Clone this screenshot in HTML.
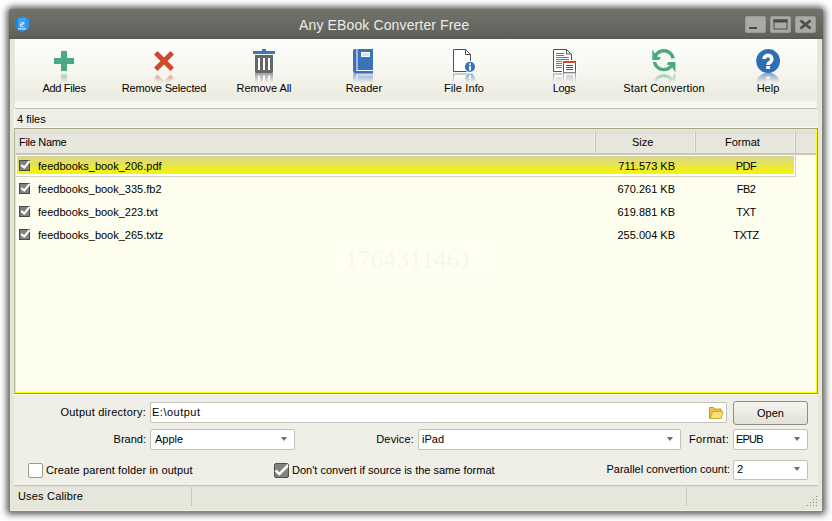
<!DOCTYPE html>
<html><head><meta charset="utf-8">
<style>
*{box-sizing:border-box;margin:0;padding:0}
html,body{width:832px;height:521px;overflow:hidden;background:#fff}
body{position:relative;font-family:"Liberation Sans",sans-serif;font-size:11px;color:#000}
.a{position:absolute}
.t{position:absolute;white-space:pre;line-height:13px}
.r{text-align:right}
#win{left:9px;top:9px;width:814px;height:503px;background:#e7e6da;border:1px solid #84847a;border-radius:3px 3px 0 0;box-shadow:0 0 7px 2px rgba(0,0,0,.7)}
#title{left:9px;top:9px;width:814px;height:30px;background:linear-gradient(#71736c,#676862 60%,#60615b 90%,#575852);border-radius:3px 3px 0 0}
.wb{position:absolute;top:16px;width:21px;height:17px;background:#a9aaa3;border-radius:3px;box-shadow:inset 0 0 0 1px #9a9b94}
#tb{left:15px;top:39px;width:802px;height:70px;background:linear-gradient(#fdfdfb 0%,#f9f9f4 35%,#f1f0e7 70%,#ecebdf 86%,#f6f5ee 92%,#fbfbf7 100%);border-bottom:1px solid #c1c0b3}
#strip{left:14px;top:109px;width:804px;height:19px;background:#efeee6;border-left:1px solid #fbfbf7;border-bottom:1px solid #fbfbf7}
#listo{left:14px;top:128px;width:804px;height:266px;border:1px solid #93936c;border-left-color:#b9b98f;border-top-color:#a9a980}
#list{left:15px;top:129px;width:802px;height:264px;background:#fefeee;border:1px solid #ffff00;box-shadow:inset 0 0 0 1px #fcfcf4}
#hdr{left:16px;top:130px;width:800px;height:25px;background:linear-gradient(#dfded4,#e7e6dd 25%,#e8e7de);border-top:1px solid #e4e4e8;border-bottom:2px solid #c9c7b9}
.hsep{position:absolute;top:131px;width:2px;height:22px;border-left:1px solid #efeee8;border-right:1px solid #c9c7ba}
.lbl{position:absolute;top:82px;letter-spacing:-.3px;text-align:center;white-space:pre;line-height:13px;width:120px}
#sel{left:16px;top:155px;width:780px;height:22px;background:#fff;border-bottom:1px solid #d2d1c4;border-right:1px solid #d2d1c4}
#selin{left:16px;top:155px;width:779px;height:20px;border:1px solid #fff;background:linear-gradient(#d8d495,#f8f500)}
#panel{left:14px;top:394px;width:804px;height:92px;background:#efeee7;border-top:1px solid #fbfbf8;border-bottom:1px solid #c8c7bb;box-shadow:0 1px 0 #dddcd0}
#status{left:10px;top:488px;width:812px;height:23px;background:#e7e6db;border-bottom:1px solid #f2f2ea}
.inp{position:absolute;background:#fff;border:1px solid #c3c2b6;border-radius:2px}
.arr{position:absolute;width:0;height:0;border-left:3.5px solid transparent;border-right:3.5px solid transparent;border-top:4px solid #6d6d64}
.cb{position:absolute;width:11px;height:11px;background:#828282;border:1px solid #484848}
.cbb{position:absolute;width:15px;height:15px;border:1px solid #9a9990;border-radius:2px;background:#fff}
</style></head><body>
<div id="win" class="a"></div>
<div id="title" class="a"></div>
<div class="t" style="left:299px;top:17px;font-size:14px;line-height:16px;letter-spacing:.13px;color:#ecece6">Any EBook Converter Free</div>
<div class="wb" style="left:745px"></div>
<div class="wb" style="left:770px"></div>
<div class="wb" style="left:795px"></div>

<div id="tb" class="a"></div>
<div id="strip" class="a"></div>
<div class="t" style="left:17px;top:113px">4 files</div>
<div id="listo" class="a"></div><div id="list" class="a"></div>
<div id="hdr" class="a"></div>
<div class="t" style="left:19px;top:136px;letter-spacing:-.3px">File Name</div>
<div class="t" style="left:632px;top:136px">Size</div>
<div class="t" style="left:725px;top:136px">Format</div>
<div class="hsep" style="left:594px"></div>
<div class="hsep" style="left:694px"></div>
<div class="hsep" style="left:794px"></div>
<div id="sel" class="a"></div>
<div id="selin" class="a"></div>

<svg class="a" style="left:0;top:0" width="832" height="521" viewBox="0 0 832 521">
<defs>
<linearGradient id="fg" gradientUnits="userSpaceOnUse" x1="0" y1="73" x2="0" y2="83">
<stop offset="0" stop-color="#fff" stop-opacity=".6"/><stop offset="1" stop-color="#fff" stop-opacity="0"/></linearGradient>
<mask id="fade" maskUnits="userSpaceOnUse" x="0" y="70" width="832" height="20"><rect x="0" y="70" width="832" height="20" fill="url(#fg)"/></mask>
</defs>
<g>
<!-- plus -->
<path d="M61 51h6v7h7v6h-7v7h-6v-7h-7v-6h7z" fill="#4aa97f"/>
<!-- X -->
<path d="M154 54.5L157.5 51L164 57.5L170.5 51L174 54.5L167.5 61L174 67.5L170.5 71L164 64.5L157.5 71L154 67.5L160.5 61z" fill="#d0492f"/>
<!-- trash -->
<rect x="253" y="51" width="22" height="3" fill="#3b78c0"/>
<rect x="262" y="49" width="4" height="2" fill="#3b78c0"/>
<path d="M255 55h18v17a1 1 0 0 1-1 1h-16a1 1 0 0 1-1-1z" fill="#666"/>
<rect x="258" y="58" width="2" height="12" fill="#fff"/>
<rect x="263" y="58" width="2" height="12" fill="#fff"/>
<rect x="268" y="58" width="2" height="12" fill="#fff"/>
<!-- book -->
<path d="M355 49h18v24h-18a2 2 0 0 1-2-2v-20a2 2 0 0 1 2-2z" fill="#3b73b9"/>
<rect x="356.5" y="49" width="1" height="21.5" fill="#fff"/>
<rect x="356.5" y="70" width="16.5" height="1" fill="#fff"/>
<rect x="361" y="52" width="9" height="5" fill="#fff"/>
<rect x="362" y="53" width="7" height="3" fill="#d6e0ee"/>
<!-- file info -->
<path d="M453.5 49.5h12l5 5v17h-17z" fill="#fff" stroke="#505050" stroke-width="1"/>
<path d="M465.5 49.5v5h5" fill="none" stroke="#505050" stroke-width="1"/>
<circle cx="470" cy="66.8" r="6" fill="#fff"/>
<circle cx="470" cy="66.8" r="5.1" fill="#3a74bb"/>
<rect x="469.1" y="63.3" width="1.9" height="1.9" fill="#fff"/>
<rect x="469.1" y="66.2" width="1.9" height="4.3" fill="#fff"/>
<!-- logs -->
<path d="M553.5 49.5h13l5 5v17h-18z" fill="#fff" stroke="#555" stroke-width="1"/>
<path d="M566.5 49.5v4.5h5" fill="none" stroke="#555" stroke-width="1"/>
<g fill="#777"><rect x="556" y="53" width="8" height="1"/><rect x="556" y="55" width="8" height="1"/><rect x="556" y="57" width="13" height="1"/><rect x="556" y="59" width="13" height="1"/><rect x="556" y="61" width="7" height="1"/><rect x="556" y="63" width="7" height="1"/><rect x="556" y="65" width="7" height="1"/><rect x="556" y="67" width="7" height="1"/></g>
<rect x="562" y="60" width="15" height="14" fill="#fff"/>
<rect x="563.5" y="61.5" width="12" height="11" fill="#fff" stroke="#555" stroke-width="1"/>
<rect x="563" y="61" width="13" height="2" fill="#d4472c"/>
<g fill="#555"><rect x="566" y="65" width="7" height="1"/><rect x="566" y="67" width="7" height="1"/><rect x="566" y="69" width="7" height="1"/></g>
<!-- refresh -->
<clipPath id="rc"><path d="M648 40H663.8V60H648zM663.8 40H690V58.5H663.8zM640 62H690V80H640z"/></clipPath>
<path d="M652.6999999999999 60.2a11.1 11.1 0 1 0 22.2 0a11.1 11.1 0 1 0 -22.2 0zM656.0 60.2a7.8 7.8 0 1 0 15.6 0a7.8 7.8 0 1 0 -15.6 0z" fill="#4aa97f" fill-rule="evenodd" clip-path="url(#rc)"/>
<path d="M652.3 49.2L652.3 60L659.2 60L661 57.5L656.6 56.4z" fill="#4aa97f"/>
<path d="M675.4 72.2L675.4 62L668.4 62L666.6 64.5L671 65.6z" fill="#4aa97f"/>
<!-- help -->
<circle cx="768.1" cy="61" r="11.9" fill="#2f6db4"/>
<path d="M764.2 59A3.8 3.8 0 1 1 770.4 62.1Q768.1 63.2 768.1 65" fill="none" stroke="#fff" stroke-width="3.8"/>
<rect x="766.1" y="66.1" width="4" height="2.8" fill="#fff"/>
</g>
<g mask="url(#fade)"><g transform="translate(0,145.5) scale(1,-1)">
<!-- plus -->
<path d="M61 51h6v7h7v6h-7v7h-6v-7h-7v-6h7z" fill="#4aa97f"/>
<!-- X -->
<path d="M154 54.5L157.5 51L164 57.5L170.5 51L174 54.5L167.5 61L174 67.5L170.5 71L164 64.5L157.5 71L154 67.5L160.5 61z" fill="#d0492f"/>
<!-- trash -->
<rect x="253" y="51" width="22" height="3" fill="#3b78c0"/>
<rect x="262" y="49" width="4" height="2" fill="#3b78c0"/>
<path d="M255 55h18v17a1 1 0 0 1-1 1h-16a1 1 0 0 1-1-1z" fill="#666"/>
<rect x="258" y="58" width="2" height="12" fill="#fff"/>
<rect x="263" y="58" width="2" height="12" fill="#fff"/>
<rect x="268" y="58" width="2" height="12" fill="#fff"/>
<!-- book -->
<path d="M355 49h18v24h-18a2 2 0 0 1-2-2v-20a2 2 0 0 1 2-2z" fill="#3b73b9"/>
<rect x="356.5" y="49" width="1" height="21.5" fill="#fff"/>
<rect x="356.5" y="70" width="16.5" height="1" fill="#fff"/>
<rect x="361" y="52" width="9" height="5" fill="#fff"/>
<rect x="362" y="53" width="7" height="3" fill="#d6e0ee"/>
<!-- file info -->
<path d="M453.5 49.5h12l5 5v17h-17z" fill="#fff" stroke="#505050" stroke-width="1"/>
<path d="M465.5 49.5v5h5" fill="none" stroke="#505050" stroke-width="1"/>
<circle cx="470" cy="66.8" r="6" fill="#fff"/>
<circle cx="470" cy="66.8" r="5.1" fill="#3a74bb"/>
<rect x="469.1" y="63.3" width="1.9" height="1.9" fill="#fff"/>
<rect x="469.1" y="66.2" width="1.9" height="4.3" fill="#fff"/>
<!-- logs -->
<path d="M553.5 49.5h13l5 5v17h-18z" fill="#fff" stroke="#555" stroke-width="1"/>
<path d="M566.5 49.5v4.5h5" fill="none" stroke="#555" stroke-width="1"/>
<g fill="#777"><rect x="556" y="53" width="8" height="1"/><rect x="556" y="55" width="8" height="1"/><rect x="556" y="57" width="13" height="1"/><rect x="556" y="59" width="13" height="1"/><rect x="556" y="61" width="7" height="1"/><rect x="556" y="63" width="7" height="1"/><rect x="556" y="65" width="7" height="1"/><rect x="556" y="67" width="7" height="1"/></g>
<rect x="562" y="60" width="15" height="14" fill="#fff"/>
<rect x="563.5" y="61.5" width="12" height="11" fill="#fff" stroke="#555" stroke-width="1"/>
<rect x="563" y="61" width="13" height="2" fill="#d4472c"/>
<g fill="#555"><rect x="566" y="65" width="7" height="1"/><rect x="566" y="67" width="7" height="1"/><rect x="566" y="69" width="7" height="1"/></g>
<!-- refresh -->
<clipPath id="rc2"><path d="M648 40H663.8V60H648zM663.8 40H690V58.5H663.8zM640 62H690V80H640z"/></clipPath>
<path d="M652.6999999999999 60.2a11.1 11.1 0 1 0 22.2 0a11.1 11.1 0 1 0 -22.2 0zM656.0 60.2a7.8 7.8 0 1 0 15.6 0a7.8 7.8 0 1 0 -15.6 0z" fill="#4aa97f" fill-rule="evenodd" clip-path="url(#rc2)"/>
<path d="M652.3 49.2L652.3 60L659.2 60L661 57.5L656.6 56.4z" fill="#4aa97f"/>
<path d="M675.4 72.2L675.4 62L668.4 62L666.6 64.5L671 65.6z" fill="#4aa97f"/>
<!-- help -->
<circle cx="768.1" cy="61" r="11.9" fill="#2f6db4"/>
<path d="M764.2 59A3.8 3.8 0 1 1 770.4 62.1Q768.1 63.2 768.1 65" fill="none" stroke="#fff" stroke-width="3.8"/>
<rect x="766.1" y="66.1" width="4" height="2.8" fill="#fff"/>
</g></g>
</svg>
<div class="lbl" style="left:4px;letter-spacing:-0.30px">Add Files</div>
<div class="lbl" style="left:104px;letter-spacing:-0.16px">Remove Selected</div>
<div class="lbl" style="left:204px;letter-spacing:-0.08px">Remove All</div>
<div class="lbl" style="left:304px;letter-spacing:0.04px">Reader</div>
<div class="lbl" style="left:404px;letter-spacing:0.12px">File Info</div>
<div class="lbl" style="left:504px;letter-spacing:-0.30px">Logs</div>
<div class="lbl" style="left:604px;letter-spacing:0.12px">Start Convertion</div>
<div class="lbl" style="left:708px;letter-spacing:0.03px">Help</div>

<!-- rows -->
<div class="cb" style="left:19px;top:160px"></div>
<div class="cb" style="left:19px;top:183px"></div>
<div class="cb" style="left:19px;top:206px"></div>
<div class="cb" style="left:19px;top:229px"></div>
<div class="t" style="left:38px;top:160px">feedbooks_book_206.pdf</div>
<div class="t" style="left:38px;top:183px">feedbooks_book_335.fb2</div>
<div class="t" style="left:38px;top:206px">feedbooks_book_223.txt</div>
<div class="t" style="left:38px;top:229px">feedbooks_book_265.txtz</div>
<div class="t r" style="left:575px;width:100px;top:160px">711.573 KB</div>
<div class="t r" style="left:575px;width:100px;top:183px">670.261 KB</div>
<div class="t r" style="left:575px;width:100px;top:206px">619.881 KB</div>
<div class="t r" style="left:575px;width:100px;top:229px">255.004 KB</div>
<div class="t" style="left:696px;width:100px;text-align:center;letter-spacing:-.5px;top:160px">PDF</div>
<div class="t" style="left:696px;width:100px;text-align:center;letter-spacing:-.5px;top:183px">FB2</div>
<div class="t" style="left:696px;width:100px;text-align:center;letter-spacing:-.5px;top:206px">TXT</div>
<div class="t" style="left:696px;width:100px;text-align:center;letter-spacing:-.5px;top:229px">TXTZ</div>

<div id="panel" class="a"></div>
<div class="t r" style="left:40px;width:106px;top:406px;letter-spacing:.25px">Output directory:</div>
<div class="inp" style="left:150px;top:402px;width:577px;height:21px"></div>
<div class="t" style="left:152px;top:406px;letter-spacing:.5px">E:\output</div>
<div class="a" style="left:733px;top:401px;width:75px;height:24px;border:1px solid #8e8d84;border-radius:3px;background:linear-gradient(#f6f5f0,#e2e1d7)"></div>
<div class="t" style="left:733px;width:75px;text-align:center;top:407px">Open</div>

<div class="t r" style="left:80px;width:66px;top:433px">Brand:</div>
<div class="inp" style="left:150px;top:429px;width:145px;height:21px"></div>
<div class="t" style="left:155px;top:433px">Apple</div>
<div class="arr" style="left:281px;top:437px"></div>
<div class="t r" style="left:340px;width:74px;top:433px;letter-spacing:.15px">Device:</div>
<div class="inp" style="left:418px;top:429px;width:263px;height:21px"></div>
<div class="t" style="left:422px;top:433px">iPad</div>
<div class="arr" style="left:667px;top:437px"></div>
<div class="t r" style="left:660px;width:69px;top:433px;letter-spacing:.3px">Format:</div>
<div class="inp" style="left:733px;top:429px;width:75px;height:21px"></div>
<div class="t" style="left:736px;top:433px;letter-spacing:-.8px">EPUB</div>
<div class="arr" style="left:794px;top:437px"></div>

<div class="cbb" style="left:28px;top:463px"></div>
<div class="t" style="left:46px;top:464px;letter-spacing:.12px">Create parent folder in output</div>
<div class="cbb" style="left:274px;top:463px;background:#828280;border-color:#505050"></div>
<div class="t" style="left:292px;top:464px">Don't convert if source is the same format</div>
<div class="t r" style="left:560px;width:170px;top:463px">Parallel convertion count:</div>
<div class="inp" style="left:733px;top:460px;width:75px;height:20px"></div>
<div class="t" style="left:737px;top:463px">2</div>
<div class="arr" style="left:794px;top:467px"></div>

<div id="status" class="a"></div>
<div class="a" style="left:191px;top:487px;width:1px;height:19px;background:#c9c8bc"></div>
<div class="a" style="left:686px;top:487px;width:1px;height:19px;background:#c9c8bc"></div>
<div class="t" style="left:18px;top:490px;letter-spacing:.18px">Uses Calibre</div>
<svg class="a" style="left:0;top:0" width="832" height="521" viewBox="0 0 832 521">
<!-- app icon -->
<path d="M22 16L29 19.5V28.5L22 32L15 28.5V19.5z" fill="#2a7fd6"/>
<path d="M22 16L29 19.5V28.5L22 32z" fill="#3d9cf0" opacity=".6"/>
<rect x="18" y="18" width="8" height="11" fill="#3aa2f2"/>
<text x="22" y="27" text-anchor="middle" font-family="Liberation Serif" font-style="italic" font-size="10" fill="#fff">e</text>
<rect x="18" y="28.5" width="8" height="1" fill="#fff"/>
<!-- window buttons glyphs -->
<rect x="749" y="27" width="8" height="2" fill="#4b4c47"/>
<rect x="774" y="20" width="13" height="9" fill="none" stroke="#4b4c47" stroke-width="1"/>
<rect x="773.5" y="19.5" width="14" height="3" fill="#4b4c47"/>
<path d="M800.5 20.5L810.5 28.5M810.5 20.5L800.5 28.5" stroke="#4b4c47" stroke-width="2.6"/>
<!-- checkmarks list -->
<g fill="none" stroke="#fff" stroke-width="2">
<path d="M21.2 164.9L24.2 167.6L29.6 161.0"/>
<path d="M21.2 187.9L24.2 190.6L29.6 184.0"/>
<path d="M21.2 210.9L24.2 213.6L29.6 207.0"/>
<path d="M21.2 233.9L24.2 236.6L29.6 230.0"/>

</g>
<path d="M274.6 471.3L276.6 469.4L279.3 472.2L288 463.6L288.3 467L279.3 475.8Z" fill="#fff"/>
<!-- folder -->
<path d="M709.5 407.5h4l1 1.5h6.5v9.5h-11.5z" fill="#e9c244" stroke="#c89a1c" stroke-width="1"/>
<path d="M710.5 418.5L712.5 411.5h10.5l-2 7z" fill="#f8df7a" stroke="#d4a928" stroke-width="1"/>
<!-- grip -->
<g fill="#8c8b83">
<rect x="816" y="496" width="1" height="1"/>
<rect x="813" y="499" width="1" height="1"/><rect x="816" y="499" width="1" height="1"/>
<rect x="810" y="502" width="1" height="1"/><rect x="813" y="502" width="1" height="1"/><rect x="816" y="502" width="1" height="1"/>
<rect x="807" y="505" width="1" height="1"/><rect x="810" y="505" width="1" height="1"/><rect x="813" y="505" width="1" height="1"/><rect x="816" y="505" width="1" height="1"/>
</g>
</svg>
<div class="a" style="left:333px;top:239px;width:165px;height:40px;background:rgba(255,255,255,.25)"></div>
<div class="t" style="left:345px;top:246px;font-family:'Liberation Serif',serif;font-size:25px;line-height:28px;letter-spacing:.35px;color:rgba(0,0,0,.05)">1764311461</div>
</body></html>
